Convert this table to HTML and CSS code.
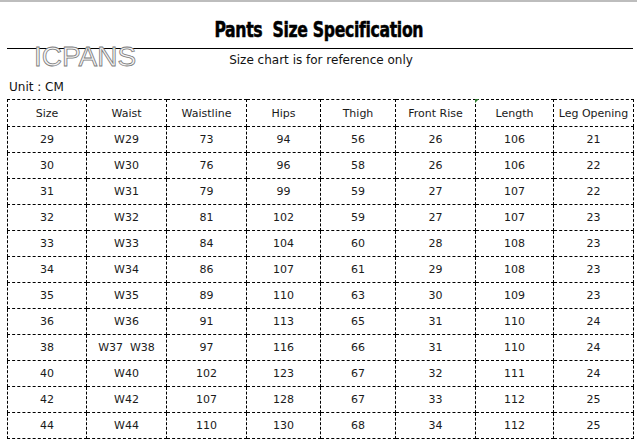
FILE: index.html
```html
<!DOCTYPE html>
<html>
<head>
<meta charset="utf-8">
<link rel="stylesheet" href="styles.css">
</head>
<body>
<div class="topline"></div>
<header class="title-bar"><h1 class="title">Pants&nbsp; Size Specification</h1></header>
<div class="brand-row">
  <div class="brand">ICPANS</div>
  <div class="note">Size chart is for reference only</div>
</div>
<div class="unit">Unit : CM</div>
<table class="chart">
  <colgroup>
    <col style="width:79px"><col style="width:80px"><col style="width:80px"><col style="width:74px">
    <col style="width:75px"><col style="width:80px"><col style="width:78px"><col style="width:80px">
  </colgroup>
  <thead>
    <tr><th>Size</th><th>Waist</th><th>Waistline</th><th>Hips</th><th>Thigh</th><th>Front Rise</th><th class="marked"><span class="marker"></span>Length</th><th>Leg Opening</th></tr>
  </thead>
  <tbody>
    <tr><td>29</td><td>W29</td><td>73</td><td>94</td><td>56</td><td>26</td><td>106</td><td>21</td></tr>
    <tr><td>30</td><td>W30</td><td>76</td><td>96</td><td>58</td><td>26</td><td>106</td><td>22</td></tr>
    <tr><td>31</td><td>W31</td><td>79</td><td>99</td><td>59</td><td>27</td><td>107</td><td>22</td></tr>
    <tr><td>32</td><td>W32</td><td>81</td><td>102</td><td>59</td><td>27</td><td>107</td><td>23</td></tr>
    <tr><td>33</td><td>W33</td><td>84</td><td>104</td><td>60</td><td>28</td><td>108</td><td>23</td></tr>
    <tr><td>34</td><td>W34</td><td>86</td><td>107</td><td>61</td><td>29</td><td>108</td><td>23</td></tr>
    <tr><td>35</td><td>W35</td><td>89</td><td>110</td><td>63</td><td>30</td><td>109</td><td>23</td></tr>
    <tr><td>36</td><td>W36</td><td>91</td><td>113</td><td>65</td><td>31</td><td>110</td><td>24</td></tr>
    <tr><td>38</td><td>W37&nbsp; W38</td><td>97</td><td>116</td><td>66</td><td>31</td><td>110</td><td>24</td></tr>
    <tr><td>40</td><td>W40</td><td>102</td><td>123</td><td>67</td><td>32</td><td>111</td><td>24</td></tr>
    <tr><td>42</td><td>W42</td><td>107</td><td>128</td><td>67</td><td>33</td><td>112</td><td>25</td></tr>
    <tr><td>44</td><td>W44</td><td>110</td><td>130</td><td>68</td><td>34</td><td>112</td><td>25</td></tr>
  </tbody>
</table>
</body>
</html>
```
FILE: styles.css
```css
html, body {
  margin: 0;
  padding: 0;
  background: #ffffff;
}
body {
  width: 637px;
  height: 446px;
  overflow: hidden;
  font-family: "DejaVu Sans", Verdana, sans-serif;
  color: #1a1a1a;
}
.topline {
  height: 2px;
  background: #bdbdbd;
}
.title-bar {
  height: 46px;
  display: flex;
  justify-content: center;
  align-items: flex-start;
}
.title {
  margin: 15px 0 0 0;
  font-family: "Liberation Sans Narrow", "DejaVu Sans Condensed", "Liberation Sans", sans-serif;
  font-stretch: condensed;
  font-weight: bold;
  font-size: 21px;
  line-height: 26px;
  color: #000;
  letter-spacing: -0.4px;
  -webkit-text-stroke: 0.5px #000;
  transform: scaleX(0.83);
  transform-origin: center;
}
.brand-row {
  margin: 0 4px 0 7px;
  border-top: 1px solid #000;
  height: 30px;
  display: flex;
  align-items: flex-start;
}
.brand {
  margin: -6px 0 0 27px;
  font-family: "Liberation Sans", Arial, sans-serif;
  font-size: 28px;
  line-height: 28px;
  color: #f4f4f4;
  -webkit-text-stroke: 0.8px #7a7a7a;
}
.note {
  margin: 3px 0 0 93px;
  font-size: 12px;
  line-height: 16px;
  color: #111;
}
.unit {
  height: 20px;
  margin-left: 9px;
  font-size: 12px;
  line-height: 16px;
  color: #111;
}
.chart {
  margin-left: 7px;
  border-collapse: collapse;
  table-layout: fixed;
  width: 627px;
}
.chart th, .chart td {
  border: 1px dashed #000;
  height: 25px;
  padding: 0;
  text-align: center;
  vertical-align: middle;
  font-size: 11px;
  font-weight: normal;
  color: #1a1a1a;
  white-space: nowrap;
}
.chart th {
  padding-top: 1px;
}
.marked {
  position: relative;
}
.marker {
  position: absolute;
  left: -1px;
  top: -1px;
  width: 0;
  height: 0;
  border-top: 4px solid #2f7d2f;
  border-right: 4px solid transparent;
}
```
